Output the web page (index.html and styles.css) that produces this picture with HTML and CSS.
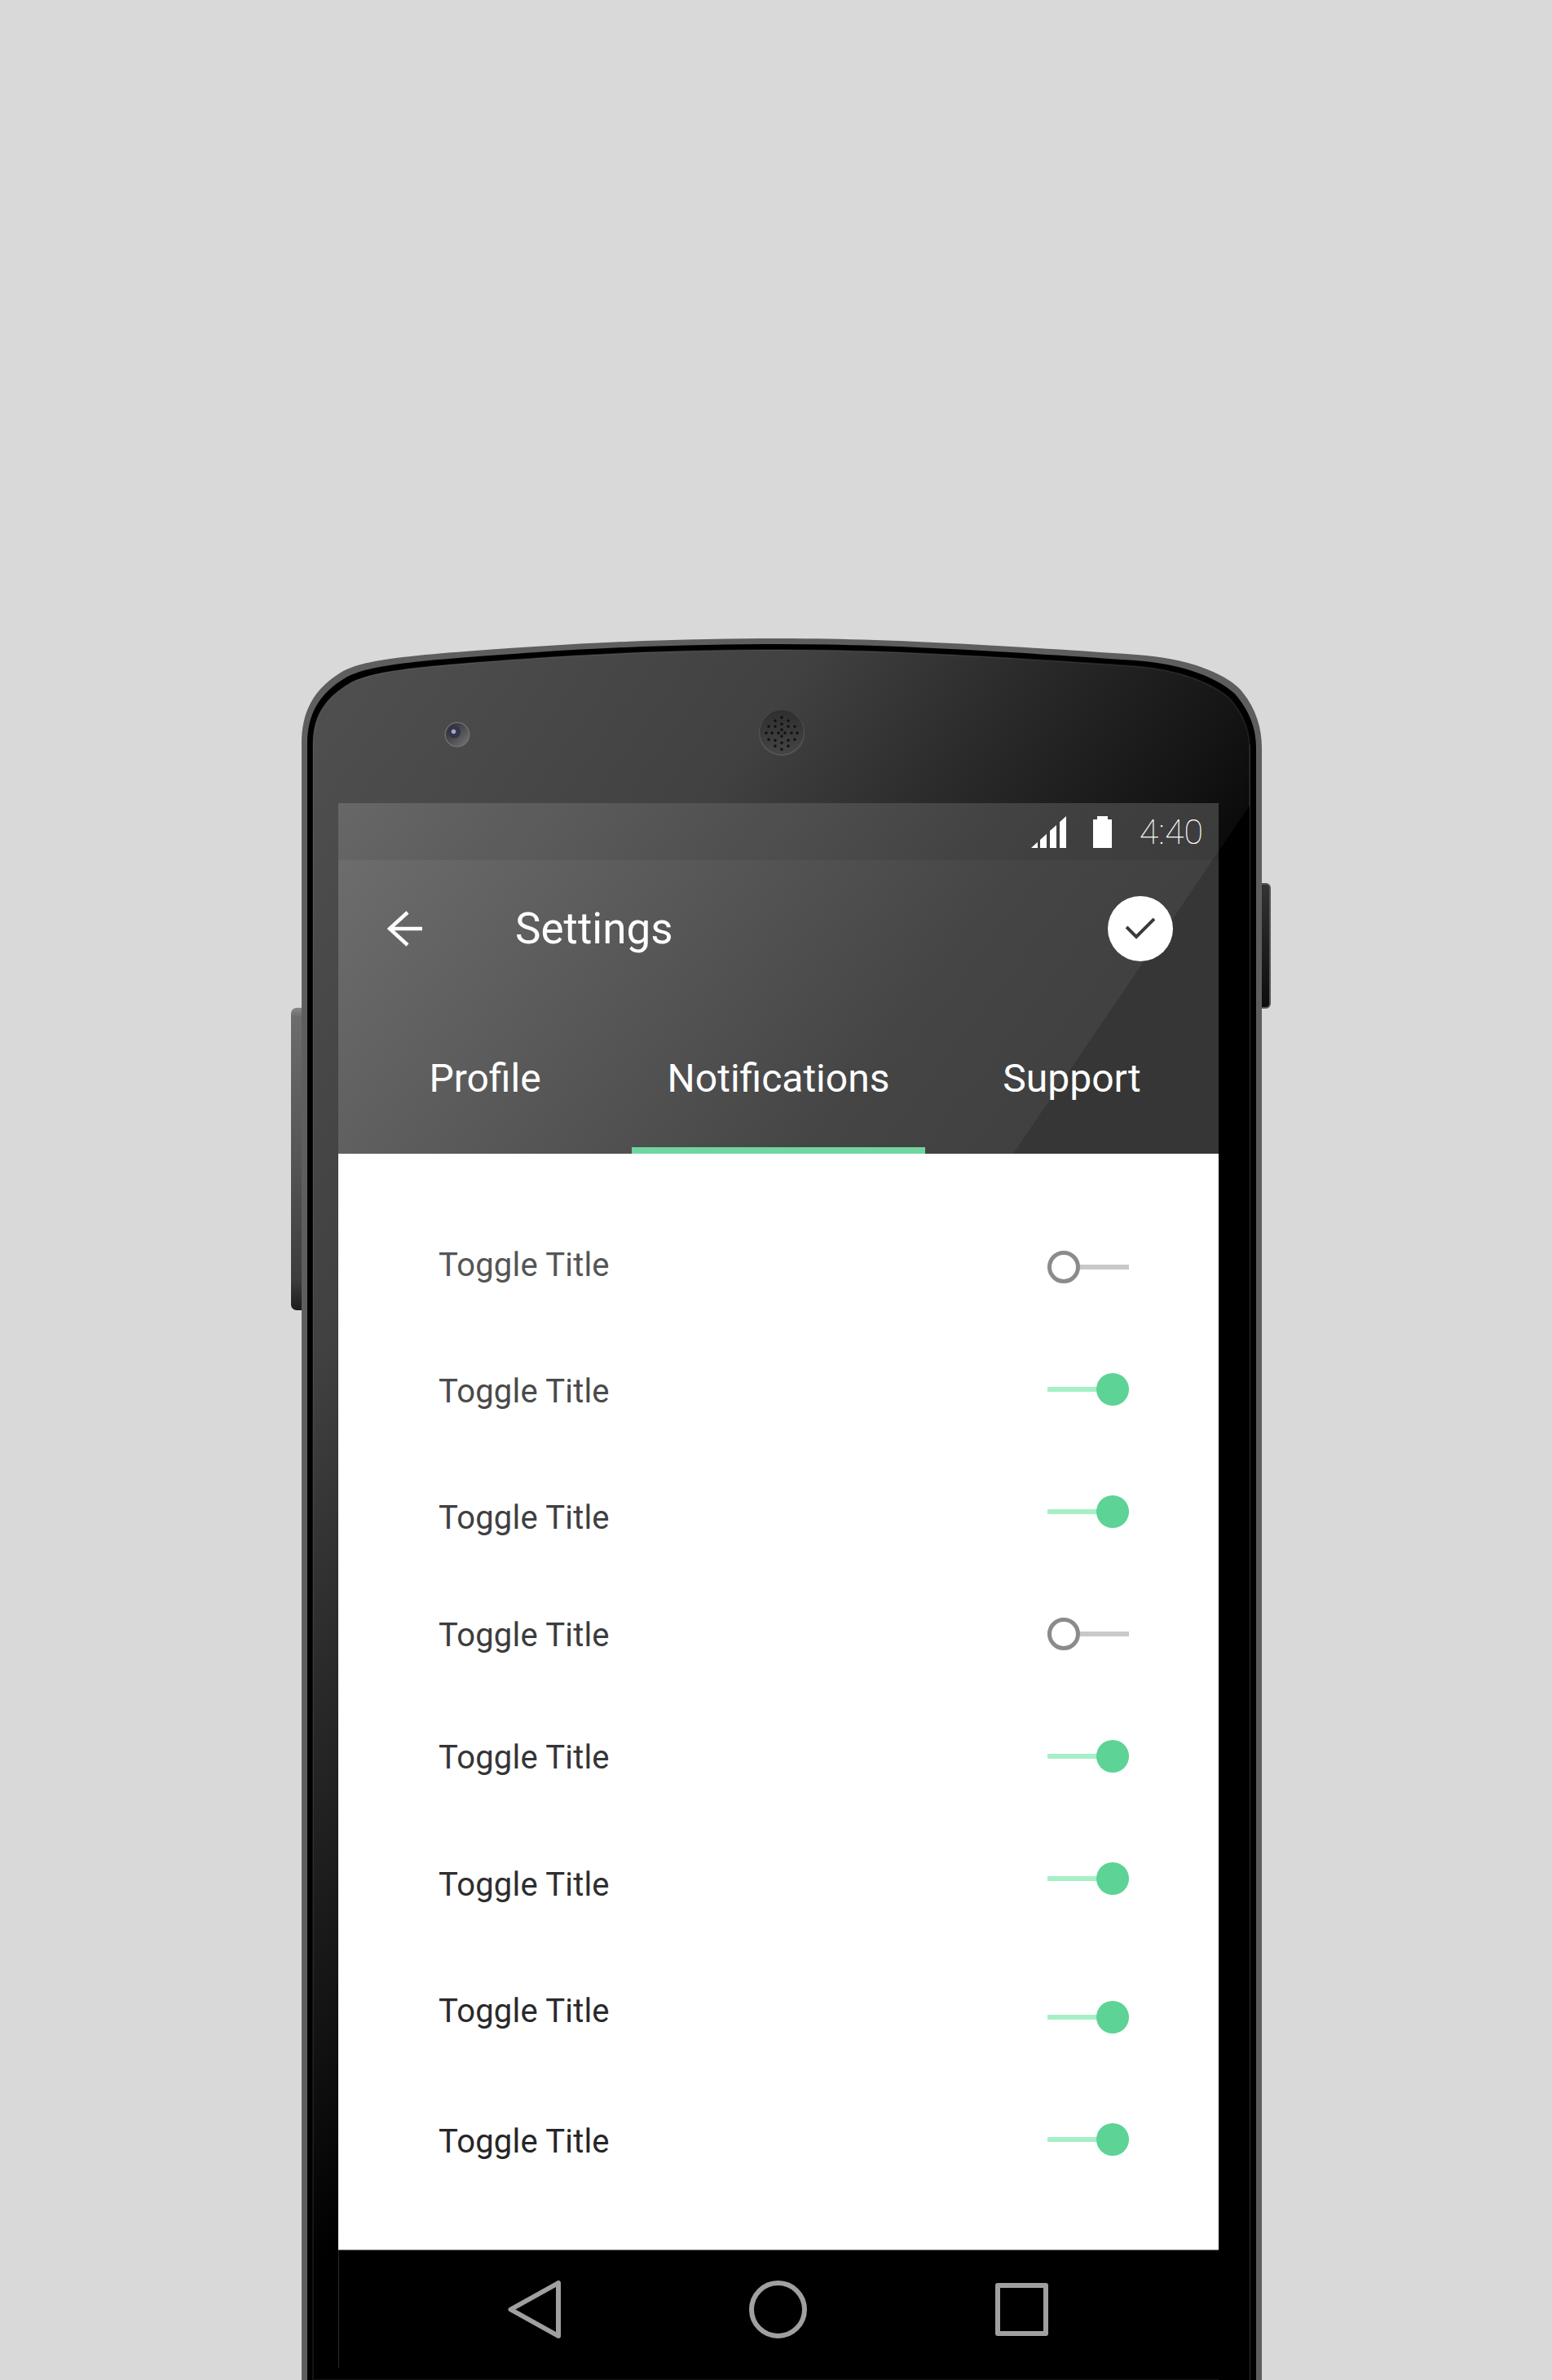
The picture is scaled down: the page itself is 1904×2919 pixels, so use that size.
FILE: index.html
```html
<!DOCTYPE html>
<html lang="en">
<head>
  <meta charset="UTF-8" />
  <title>Settings</title>
  <link rel="stylesheet" href="styles.css">
</head>
<body>
  <div class="phone">
    <!-- body of the handset, sits behind the screen -->
    <svg class="shell" width="1204" height="2136" viewBox="0 0 1204 2136">
      <defs>
        <linearGradient id="bezel" gradientUnits="userSpaceOnUse" x1="44" y1="115" x2="925" y2="736">
          <stop offset="0" stop-color="#4e4e4e" />
          <stop offset="0.4" stop-color="#414141" />
          <stop offset="0.606" stop-color="#2b2b2b" />
          <stop offset="0.835" stop-color="#141414" />
          <stop offset="1" stop-color="#000000" />
        </linearGradient>
        <linearGradient id="keyLeft" x1="0" y1="0" x2="0" y2="1">
          <stop offset="0" stop-color="#888888" />
          <stop offset="0.03" stop-color="#6c6c6c" />
          <stop offset="0.5" stop-color="#555555" />
          <stop offset="0.9" stop-color="#3c3c3c" />
          <stop offset="1" stop-color="#1c1c1c" />
        </linearGradient>
        <linearGradient id="keyRight" x1="0" y1="0" x2="0" y2="1">
          <stop offset="0" stop-color="#333333" />
          <stop offset="1" stop-color="#0c0c0c" />
        </linearGradient>
        <linearGradient id="lens" x1="0" y1="0" x2="1" y2="1">
          <stop offset="0" stop-color="#26262c" />
          <stop offset="1" stop-color="#767676" />
        </linearGradient>
        <linearGradient id="grill" x1="0" y1="0" x2="0" y2="1">
          <stop offset="0" stop-color="#2e2e2e" />
          <stop offset="1" stop-color="#454545" />
        </linearGradient>
      </defs>
      <rect x="1" y="453" width="24" height="371" rx="7" fill="url(#keyLeft)" />
      <rect x="1180" y="301" width="22" height="152" rx="5" fill="url(#keyRight)" stroke="#565656" stroke-width="2" />
      <path class="edge" d="M14 2136V130C14 90 28 62 65 40C95 25 150 20 300 10C420 2 520 0 600 0C720 0 850 7 1039 20C1100 24 1145 42 1165 62C1185 85 1192 110 1192 134V2136Z" />
      <path class="band" d="M21 2136V130C21 94 34 68 70 47C100 32 155 27 302 17C420 9 520 7 600 7C720 7 848 14 1037 27C1096 31 1139 49 1159 68C1178 90 1185 112 1185 134V2136Z" />
      <path class="bezel" fill="url(#bezel)" d="M28 2136V130C28 98 40 74 75 54C105 39 160 34 304 24C420 16 520 14 600 14C720 14 846 21 1035 34C1092 38 1133 56 1153 74C1171 95 1177 116 1177 134V2136Z" />
      <polygon class="bezel-dark" points="1177,205 1177,2136 1139,2136 1139,261" />
      <line class="bezel-line" x1="1177.5" y1="130" x2="1177.5" y2="2136" />

      <g transform="translate(205 118)">
        <circle r="15.5" fill="#6e6e6e" />
        <circle r="14" fill="url(#lens)" />
        <circle cx="-3.5" cy="-3" r="7.5" fill="#34344a" />
        <circle cx="-4.5" cy="-3.7" r="2.7" fill="#a8a8c8" />
      </g>

      <g transform="translate(603 116)">
        <circle r="28" fill="#555555" />
        <circle cy="-1" r="27" fill="url(#grill)" />
        <g class="holes">
          <circle cy="-19" r="1.8" /><circle cx="-8" cy="-15" r="1.8" /><circle cx="8" cy="-15" r="1.8" />
          <circle cx="-16" cy="-8" r="1.8" /><circle cx="-8" cy="-8" r="1.8" /><circle cy="-11" r="1.8" /><circle cx="8" cy="-8" r="1.8" /><circle cx="16" cy="-8" r="1.8" />
          <circle cy="-4" r="1.8" /><circle cx="-4" r="1.8" /><circle cx="4" r="1.8" />
          <circle cx="-19" r="1.8" /><circle cx="-12" r="1.8" /><circle cx="12" r="1.8" /><circle cx="19" r="1.8" />
          <circle cy="4" r="1.8" /><circle cx="-16" cy="8" r="1.8" /><circle cx="-8" cy="9" r="1.8" /><circle cx="8" cy="9" r="1.8" /><circle cx="16" cy="8" r="1.8" />
          <circle cy="12" r="1.8" /><circle cx="-8" cy="16" r="1.8" /><circle cx="8" cy="16" r="1.8" /><circle cy="20" r="1.8" />
        </g>
      </g>
    </svg>

    <div class="screen">
      <header class="appbar">
        <div class="status">
          <svg class="signal" width="43" height="39" viewBox="0 0 43 39">
            <path d="M0 39L8 31.7V39ZM11 39V29L19 21.8V39ZM23 39V18.1L31 10.9V39ZM35 39V7.3L43 0V39Z" />
          </svg>
          <svg class="battery" width="23" height="39" viewBox="0 0 23 39">
            <path d="M5 0H18V4H23V39H0V4H5Z" />
          </svg>
          <span class="clock">4:40</span>
        </div>
        <div class="toolbar">
          <svg class="back" width="44" height="44" viewBox="0 0 44 44">
            <path d="M43 22H3M25 2L3 22L25 42" />
          </svg>
          <h1 class="title">Settings</h1>
          <button class="done">
            <svg width="36" height="26" viewBox="0 0 36 26">
              <path d="M1 11L13 23L35 1" />
            </svg>
          </button>
        </div>
        <nav class="tabs">
          <a class="tab">Profile</a>
          <a class="tab active">Notifications</a>
          <a class="tab">Support</a>
        </nav>
      </header>

      <main class="list">
        <div class="row"><span class="label">Toggle Title</span><span class="toggle"></span></div>
        <div class="row"><span class="label">Toggle Title</span><span class="toggle on"></span></div>
        <div class="row"><span class="label">Toggle Title</span><span class="toggle on"></span></div>
        <div class="row"><span class="label">Toggle Title</span><span class="toggle"></span></div>
        <div class="row"><span class="label">Toggle Title</span><span class="toggle on"></span></div>
        <div class="row"><span class="label">Toggle Title</span><span class="toggle on"></span></div>
        <div class="row"><span class="label">Toggle Title</span><span class="toggle on"></span></div>
        <div class="row"><span class="label">Toggle Title</span><span class="toggle on"></span></div>
      </main>

      <footer class="navbar">
        <svg width="65" height="71" viewBox="0 0 65 71" class="nav-icon">
          <path d="M62 3V68L3.5 35.5Z" />
        </svg>
        <svg width="71" height="71" viewBox="0 0 71 71" class="nav-icon">
          <circle cx="35.5" cy="35.5" r="32.5" />
        </svg>
        <svg width="65" height="65" viewBox="0 0 65 65" class="nav-icon">
          <rect x="3" y="3" width="59" height="59" />
        </svg>
      </footer>
    </div>
  </div>
</body>
</html>
```

FILE: styles.css
```css
html, body {
  margin: 0;
  height: 2919px;
  overflow: hidden;
}

body {
  background-color: #d9d9d9;
  font-family: Roboto, "Liberation Sans", sans-serif;
}

.phone {
  position: relative;
  width: 1204px;
  margin-left: 356px;
  padding-top: 783px;
}

.shell {
  position: absolute;
  top: 783px;
  left: 0;
}

.edge { fill: #5f5d60; }
.band { fill: #000; }
.bezel { stroke: rgba(255,255,255,0.08); stroke-width: 2; }
.bezel-dark { fill: #000; }
.bezel-line { stroke: #303030; stroke-width: 1; }
.holes circle { fill: #111; }

.screen {
  position: relative;
  width: 1080px;
  margin-left: 59px;
  margin-top: 202px;
}

.appbar {
  position: relative;
  height: 430px;
  background: linear-gradient(127deg, #6f6f6f 0%, #454545 64%, #3c3c3c 100%);
  color: #fff;
  overflow: hidden;
}

/* darker wedge in the lower right of the bar */
.appbar::after {
  content: "";
  position: absolute;
  top: 0;
  left: 0;
  width: 100%;
  height: 100%;
  background: #363636;
  clip-path: polygon(1080px 59px, 1080px 430px, 828px 430px);
}

.status, .toolbar, .tabs {
  position: relative;
  z-index: 1;
}

.status {
  display: flex;
  align-items: center;
  justify-content: flex-end;
  height: 70px;
  padding-right: 19px;
  background: rgba(0,0,0,0.07);
}

.signal, .battery { fill: #fff; }
.signal { margin-right: 33px; }
.battery { margin-right: 34px; }

.clock {
  font-size: 43px;
  font-weight: 100;
}

.toolbar {
  display: flex;
  align-items: center;
  height: 168px;
  padding-left: 60px;
}

.back {
  fill: none;
  stroke: #fff;
  stroke-width: 4.5;
}

.title {
  flex: 1;
  margin: 0 0 0 113px;
  font-size: 53px;
  font-weight: 400;
}

.done {
  width: 80px;
  height: 80px;
  margin-right: 56px;
  border: none;
  border-radius: 50%;
  padding: 0;
  background-color: #fff;
}

.done svg {
  display: block;
  margin: 0 auto;
  fill: none;
  stroke: #3a3a3a;
  stroke-width: 4;
}

.tabs {
  display: flex;
  height: 192px;
}

.tab {
  flex: 1;
  display: flex;
  justify-content: center;
  padding-top: 71px;
  box-sizing: border-box;
  font-size: 48px;
}

.tab.active {
  border-bottom: 8px solid #6fd6a0;
}

.list {
  height: 1345px;
  padding-top: 64px;
  background-color: #fff;
  border-bottom: 1px solid #777;
  box-sizing: border-box;
}

.row {
  display: flex;
  align-items: center;
  justify-content: space-between;
  height: 150px;
  padding: 0 110px 0 123px;
}

.row:nth-child(7) { margin-top: 20px; }

.label {
  font-size: 40px;
  letter-spacing: 0.2px;
}

/* the titles do not sit quite level with their toggles */
.row:nth-child(1) .label { color: #555; margin-bottom: 6px; }
.row:nth-child(2) .label { color: #4a4a4a; margin-top: 4px; }
.row:nth-child(3) .label { color: #404040; margin-top: 14px; }
.row:nth-child(4) .label { color: #3c3c3c; margin-top: 2px; }
.row:nth-child(5) .label { color: #353535; margin-top: 2px; }
.row:nth-child(6) .label { color: #2e2e2e; margin-top: 14px; }
.row:nth-child(7) .label { color: #2a2a2a; margin-bottom: 16px; }
.row:nth-child(8) .label { color: #262626; margin-top: 4px; }

.toggle {
  position: relative;
  width: 100px;
  height: 40px;
}

.toggle::before {
  content: "";
  position: absolute;
  top: 17px;
  left: 0;
  width: 100%;
  height: 6px;
  background-color: #c9c9c9;
}

.toggle::after {
  content: "";
  position: absolute;
  top: 0;
  left: 0;
  width: 40px;
  height: 40px;
  box-sizing: border-box;
  border: 5px solid #8b8b8b;
  border-radius: 50%;
  background-color: #fff;
}

.toggle.on::before { background-color: #a5f0c5; }

.toggle.on::after {
  left: 60px;
  border: none;
  background-color: #5dd395;
}

.navbar {
  display: flex;
  align-items: center;
  gap: 231px;
  height: 144px;
  padding-left: 207px;
  box-sizing: border-box;
  background-color: #000;
  border-left: 1px solid #2a2a2a;
}

.nav-icon {
  fill: none;
  stroke: #a0a0a0;
  stroke-width: 6;
  stroke-linejoin: round;
}
```
